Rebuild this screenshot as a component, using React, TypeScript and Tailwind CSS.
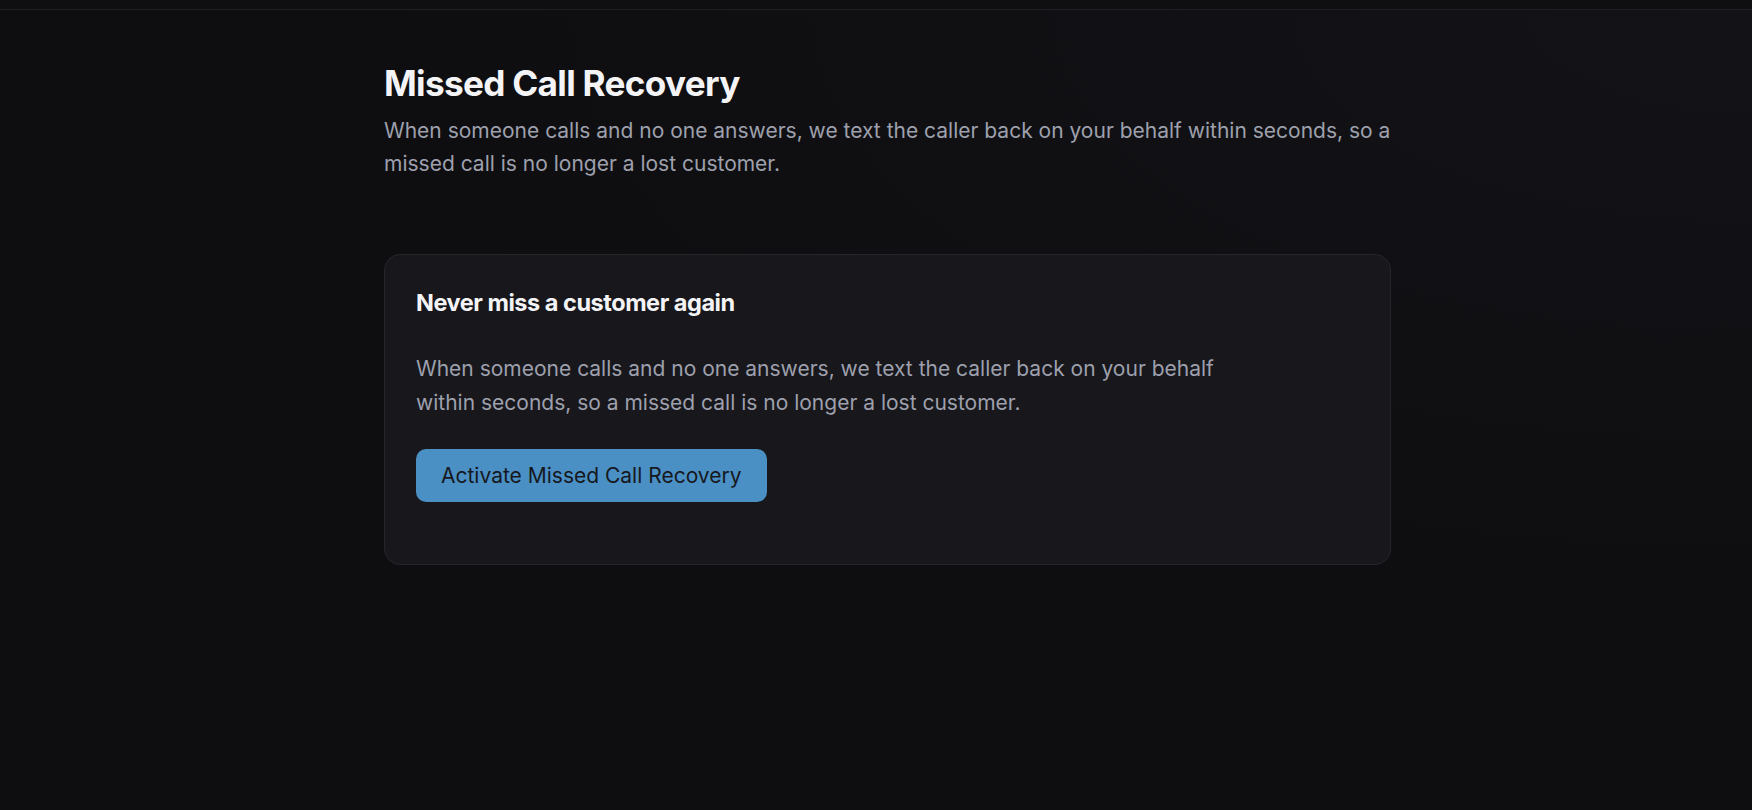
import React from "react";

export default function App() {
  return (
    <div
      className="min-h-[810px] w-full bg-[#0e0e11] text-white"
      style={{ fontFamily: "Inter, 'Noto Sans', sans-serif" }}
    >
      <div className="h-[10px] border-b border-[#1f1f24] bg-[#0f0f12]" />
      <div className="bg-[radial-gradient(ellipse_at_top_right,#131317_0%,#0e0e11_55%)] min-h-[800px]">
        <div className="ml-[384px] w-[1007px] pt-[51px]">
          <h1 className="text-[35.2px] font-bold leading-[44px] tracking-[-0.02em] text-[#f4f4f6]">
            Missed Call Recovery
          </h1>
          <p className="mt-[10px] w-[1020px] text-[21px] leading-[32.7px] text-[#9ea0ad]">
            When someone calls and no one answers, we text the caller back on your behalf within seconds, so a
            missed call is no longer a lost customer.
          </p>
          <div className="mt-[74px] rounded-[16px] border border-[#25252b] bg-[#17171c] px-[31px] pt-[32px] pb-[62px]">
            <h2 className="text-[23.5px] font-bold leading-[32px] tracking-[-0.02em] text-[#f4f4f6]">
              Never miss a customer again
            </h2>
            <p className="mt-[33px] max-w-[820px] text-[21px] leading-[33.5px] text-[#9ea0ad]">
              When someone calls and no one answers, we text the caller back on your behalf within seconds, so a
              missed call is no longer a lost customer.
            </p>
            <button className="mt-[30px] h-[53px] rounded-[10px] bg-[#4a90c4] px-[25px] text-[21px] text-[#16181d]">
              Activate Missed Call Recovery
            </button>
          </div>
        </div>
      </div>
    </div>
  );
}
